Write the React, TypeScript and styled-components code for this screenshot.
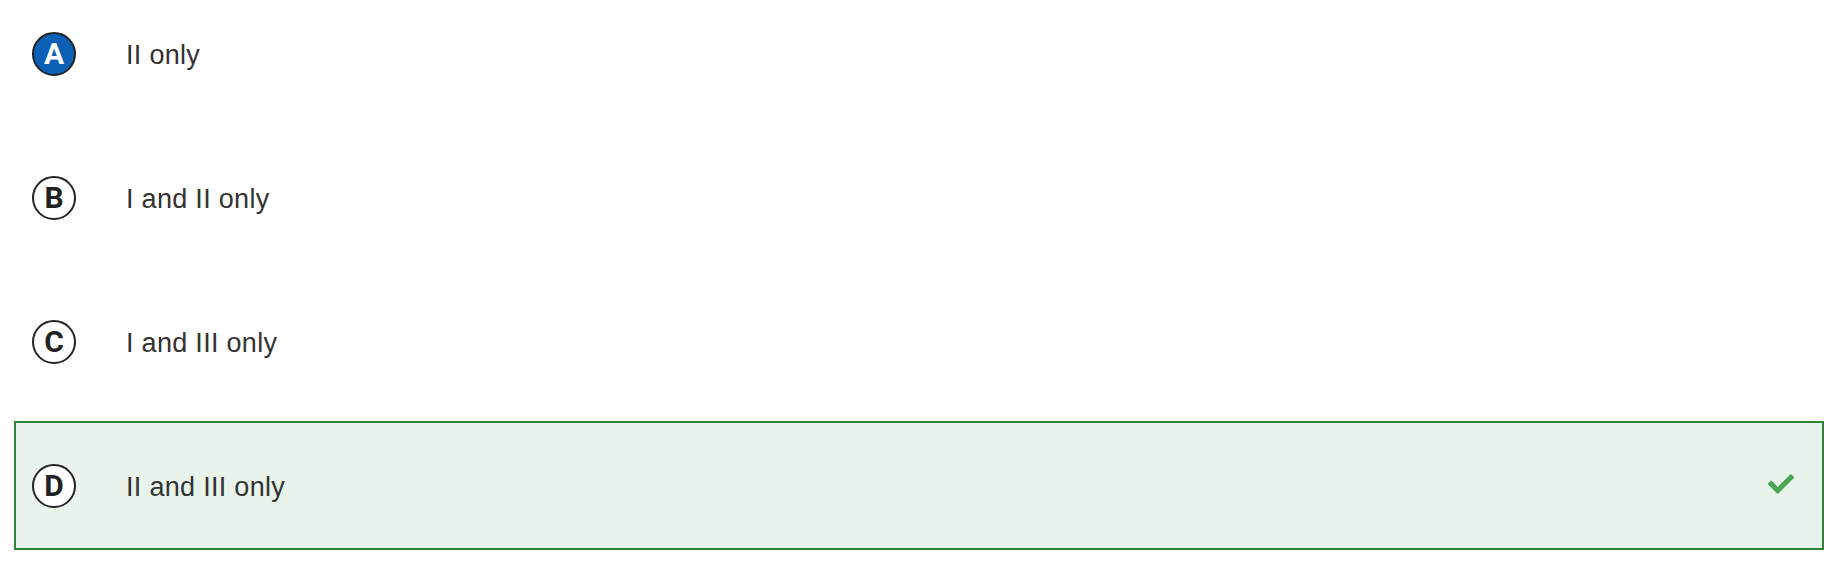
import React from "react";
import styled, { createGlobalStyle } from "styled-components";

const GlobalStyle = createGlobalStyle`
  html, body {
    margin: 0;
    padding: 0;
    background: #ffffff;
    overflow: hidden;
  }
  body {
    font-family: "Liberation Sans", Arial, Helvetica, sans-serif;
  }
`;

const Page = styled.div`
  width: 1834px;
  height: 562px;
  padding: 0 10px 0 14px;
  box-sizing: border-box;
  overflow: hidden;
`;

const List = styled.ul`
  list-style: none;
  margin: -11px 0 0;
  padding: 0;
  display: flex;
  flex-direction: column;
  gap: 15px;
`;

const Option = styled.li<{ $correct?: boolean }>`
  display: flex;
  align-items: center;
  height: 129px;
  box-sizing: border-box;
  padding: 0 28px 0 16px;
  border: 2px solid ${(p) => (p.$correct ? "#2e8539" : "transparent")};
  background: ${(p) => (p.$correct ? "#e8f3eb" : "transparent")};
`;

const Badge = styled.span<{ $selected?: boolean }>`
  flex: none;
  width: 44px;
  height: 44px;
  box-sizing: border-box;
  border-radius: 50%;
  border: 2px solid #222222;
  background: ${(p) => (p.$selected ? "#0b5fb4" : "#ffffff")};
  color: ${(p) => (p.$selected ? "#ffffff" : "#222222")};
  display: flex;
  align-items: center;
  justify-content: center;
  font-family: Roboto, "Liberation Sans", sans-serif;
  font-weight: 700;
  font-size: 30px;
  line-height: 1;
`;

const Label = styled.span`
  flex: 1;
  margin-left: 50px;
  font-family: "Liberation Sans", Arial, Helvetica, sans-serif;
  font-size: 27px;
  letter-spacing: 0.3px;
  color: #333333;
  line-height: 1;
  padding-top: 3px;
`;

const Check = styled.svg`
  flex: none;
  width: 26px;
  height: 20px;
  fill: #4aa64f;
  margin-top: -4px;
`;

const options = [
  { letter: "A", text: "II only", selected: true, correct: false },
  { letter: "B", text: "I and II only", selected: false, correct: false },
  { letter: "C", text: "I and III only", selected: false, correct: false },
  { letter: "D", text: "II and III only", selected: false, correct: true },
];

export default function App() {
  return (
    <Page>
      <GlobalStyle />
      <List>
        {options.map((o) => (
          <Option key={o.letter} $correct={o.correct}>
            <Badge $selected={o.selected}>{o.letter}</Badge>
            <Label>{o.text}</Label>
            {o.correct && (
              <Check viewBox="0 64 512 384" aria-hidden="true">
                <path d="M173.898 439.404l-166.4-166.4c-9.997-9.997-9.997-26.206 0-36.204l36.203-36.204c9.997-9.998 26.207-9.998 36.204 0L192 312.69 432.095 72.596c9.997-9.997 26.207-9.997 36.204 0l36.203 36.204c9.997 9.997 9.997 26.206 0 36.204l-294.4 294.401c-9.998 9.997-26.207 9.997-36.204-.001z" />
              </Check>
            )}
          </Option>
        ))}
      </List>
    </Page>
  );
}
